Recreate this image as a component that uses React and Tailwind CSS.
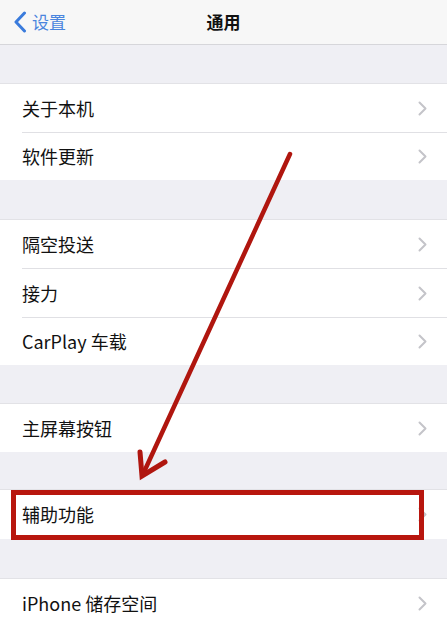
import React from "react";

const Chevron = () => (
  <svg width="9" height="15" viewBox="0 0 9 15" className="shrink-0">
    <path d="M1.5 1.5 L7.5 7.5 L1.5 13.5" fill="none" stroke="#c4c4c9" strokeWidth="2" strokeLinecap="round" strokeLinejoin="round" />
  </svg>
);

const Row = ({ label, sep, h = "h-[48px]" }) => (
  <div className="bg-white">
    <div className={`${h} flex items-center justify-between pl-[22px] pr-[20px]`}>
      <span className="text-[18px] text-[#111]">{label}</span>
      <Chevron />
    </div>
    {sep && <div className="ml-[22px] h-px bg-[#e0e0e4]" />}
  </div>
);

const Gap = ({ h }) => (
  <div className={`${h} bg-[#efeff4] border-b border-[#e2e2e6]`} />
);

export default function App() {
  return (
    <div
      className="relative w-[447px] h-[626px] overflow-hidden bg-[#efeff4]"
      style={{ fontFamily: '"Noto Sans CJK SC", "Noto Sans", sans-serif' }}
    >
      <div className="h-[45px] bg-[#f7f7f7] border-b border-[#d6d6da] flex items-center relative">
        <div className="flex items-center pl-[13px] gap-[5px]">
          <svg width="14" height="22" viewBox="0 0 14 22">
            <path d="M11.5 2 L3 11 L11.5 20" fill="none" stroke="#3a7bdc" strokeWidth="3" strokeLinecap="round" strokeLinejoin="round" />
          </svg>
          <span className="text-[17px] text-[#4a85de]">设置</span>
        </div>
        <div className="absolute left-0 right-0 text-center text-[17px] font-semibold text-[#111] pointer-events-none">
          通用
        </div>
      </div>
      <Gap h="h-[39px]" />
      <Row label="关于本机" sep />
      <Row label="软件更新" h="h-[47px]" />
      <Gap h="h-[40px]" />
      <Row label="隔空投送" sep />
      <Row label="接力" sep />
      <Row label="CarPlay 车载" h="h-[47px]" />
      <Gap h="h-[39px]" />
      <Row label="主屏幕按钮" />
      <Gap h="h-[38px]" />
      <Row label="辅助功能" h="h-[49px]" />
      <Gap h="h-[40px]" />
      <Row label="iPhone 储存空间" />

      <div className="absolute left-[11px] top-[490px] w-[413px] h-[50px] border-[5px] border-[#b8160e]" />

      <svg className="absolute left-0 top-0 pointer-events-none" width="447" height="626" viewBox="0 0 447 626">
        <line x1="290" y1="154" x2="144" y2="472" stroke="#b0160f" strokeWidth="4.5" strokeLinecap="round" />
        <polyline points="140,452 142,476 165,462" fill="none" stroke="#b0160f" strokeWidth="5" strokeLinejoin="miter" strokeLinecap="round" />
      </svg>
    </div>
  );
}
